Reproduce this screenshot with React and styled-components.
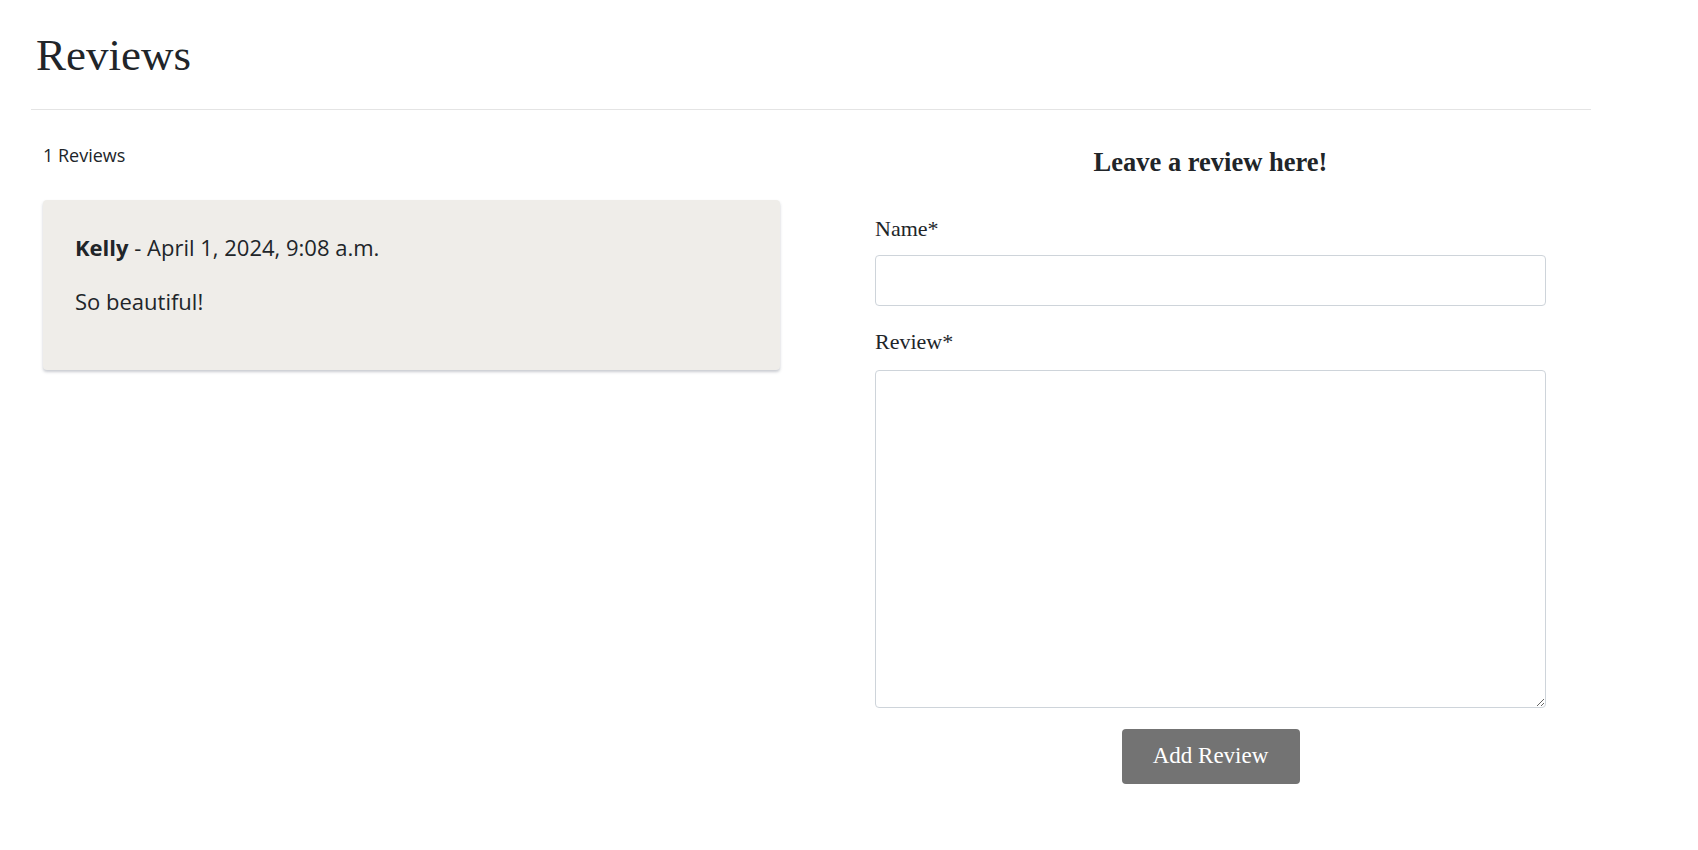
import React from "react";
import styled, { createGlobalStyle } from "styled-components";

const Global = createGlobalStyle`
  html, body { margin: 0; padding: 0; background: #fff; }
  body { font-family: "Open Sans", "Liberation Sans", sans-serif; color: #212529; }
  * { box-sizing: border-box; }
`;

const serif = `"Liberation Serif", "DejaVu Serif", serif`;
const sans = `"Open Sans", "Liberation Sans", sans-serif`;

const Page = styled.div`
  width: 1560px;
  margin-left: 31px;
  padding-top: 28px;
`;

const Title = styled.h1`
  margin: 0;
  padding: 0 0 27px 5px;
  font-family: ${serif};
  font-weight: 400;
  font-size: 45px;
  line-height: 54px;
  color: #212529;
  border-bottom: 1px solid #e4e4e4;
`;

const Columns = styled.div`
  display: grid;
  grid-template-columns: 780px 780px;
`;

const LeftCol = styled.div`
  padding: 32px 12px 0 12px;
  display: flex;
  flex-direction: column;
`;

const Count = styled.p`
  margin: 0 0 32px 0;
  font-family: ${sans};
  font-size: 18px;
  line-height: 26px;
  color: #212529;
`;

const Card = styled.div`
  width: 737px;
  height: 170px;
  background: #efede9;
  border-radius: 4px;
  box-shadow: 0 2px 3px rgba(60, 70, 90, 0.28);
  padding: 31px 32px;
  font-family: ${sans};
  font-size: 22px;
  color: #212529;
`;

const Meta = styled.p`
  margin: 0 0 22px 0;
  line-height: 32px;
`;

const Author = styled.strong`
  font-weight: 700;
`;

const Body = styled.p`
  margin: 0;
  line-height: 32px;
`;

const RightCol = styled.div`
  padding: 37px 0 0 64px;
`;

const Form = styled.form`
  width: 671px;
  display: flex;
  flex-direction: column;
`;

const FormTitle = styled.h3`
  margin: 0 0 35px 0;
  text-align: center;
  font-family: ${serif};
  font-weight: 700;
  font-size: 26.5px;
  line-height: 1.2;
  color: #212529;
`;

const Label = styled.label`
  font-family: ${serif};
  font-size: 22px;
  line-height: 30px;
  color: #212529;
  margin-bottom: ${(p) => p.$gap || 11}px;
`;

const Input = styled.input`
  width: 100%;
  height: 51px;
  border: 1px solid #ced4da;
  border-radius: 4px;
  padding: 6px 12px;
  font-size: 16px;
  margin-bottom: 21px;
  outline: none;
`;

const TextArea = styled.textarea`
  width: 100%;
  height: 338px;
  border: 1px solid #ced4da;
  border-radius: 4px;
  padding: 6px 12px;
  font-size: 16px;
  outline: none;
  margin-bottom: 21px;
  display: block;
`;

const Button = styled.button`
  align-self: center;
  width: 178px;
  height: 55px;
  background: #737373;
  color: #fff;
  border: none;
  border-radius: 4px;
  font-family: ${serif};
  font-size: 23px;
  cursor: pointer;
`;

export default function App() {
  return (
    <>
      <Global />
      <Page>
        <Title>Reviews</Title>
        <Columns>
          <LeftCol>
            <Count>1 Reviews</Count>
            <Card>
              <Meta>
                <Author>Kelly</Author> - April 1, 2024, 9:08 a.m.
              </Meta>
              <Body>So beautiful!</Body>
            </Card>
          </LeftCol>
          <RightCol>
            <Form onSubmit={(e) => e.preventDefault()}>
              <FormTitle>Leave a review here!</FormTitle>
              <Label htmlFor="name">Name*</Label>
              <Input id="name" type="text" />
              <Label htmlFor="review" $gap={13}>Review*</Label>
              <TextArea id="review" />
              <Button type="submit">Add Review</Button>
            </Form>
          </RightCol>
        </Columns>
      </Page>
    </>
  );
}
